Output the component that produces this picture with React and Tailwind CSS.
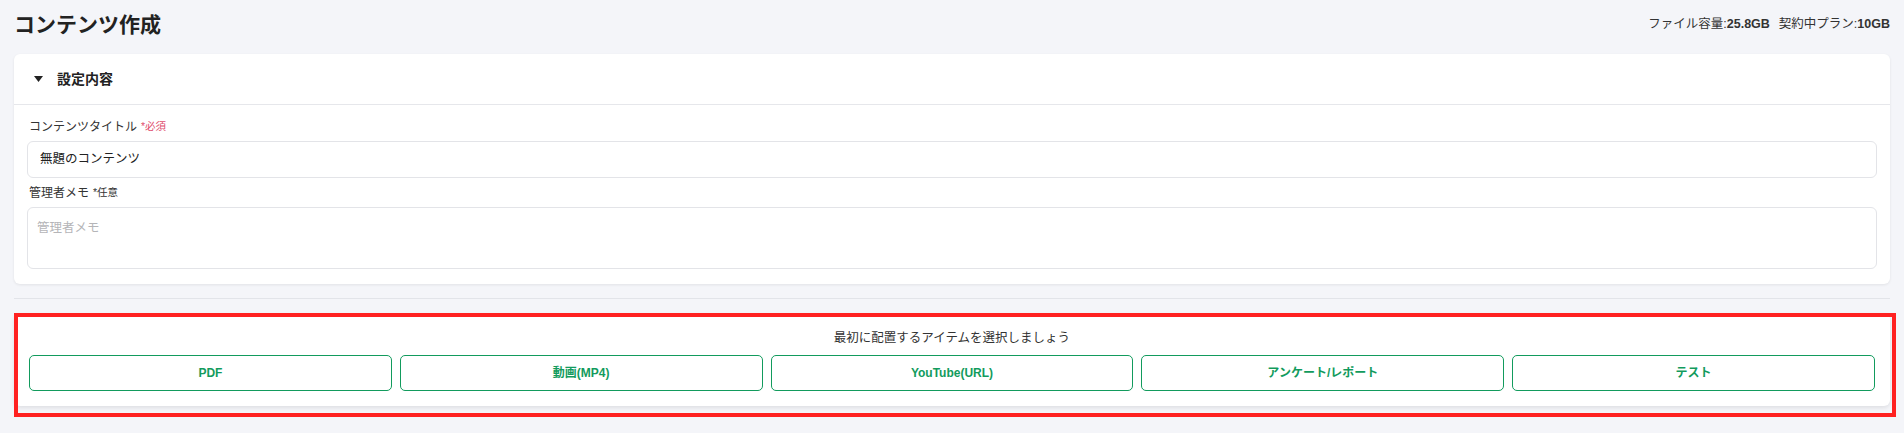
import React from "react";

const FONT = { fontFamily: '"Liberation Sans", "Noto Sans CJK JP", sans-serif' };

const items = ["PDF", "動画(MP4)", "YouTube(URL)", "アンケート/レポート", "テスト"];

export default function App() {
  return (
    <div
      className="min-h-[433px] bg-[#f4f5f9] px-[14px] text-[#222]"
      style={FONT}
    >
      {/* Header */}
      <div className="flex h-[48px] items-center justify-between">
        <h1 className="text-[21px] font-bold leading-none text-[#222]">コンテンツ作成</h1>
        <div className="flex items-center text-[12.5px] text-[#333]">
          <span>ファイル容量:</span>
          <span className="font-bold">25.8GB</span>
          <span className="ml-[9px]">契約中プラン:</span>
          <span className="font-bold">10GB</span>
        </div>
      </div>

      {/* Settings card */}
      <div className="mt-[6px] rounded-[6px] bg-white shadow-[0_1px_3px_rgba(0,0,0,0.08)]">
        <div className="flex h-[51px] items-center border-b border-[#e6e7eb] pl-[20px]">
          <svg width="9" height="6" viewBox="0 0 9 6" className="block">
            <path d="M0 0 L9 0 L4.5 6 Z" fill="#222" />
          </svg>
          <span className="ml-[14px] text-[14px] font-bold leading-none text-[#222]">設定内容</span>
        </div>
        <div className="px-[13px] pt-[13px] pb-[15px]">
          <div className="flex h-[18px] items-center pl-[2px] text-[12px] text-[#333]">
            <span>コンテンツタイトル</span>
            <span className="ml-[4px] text-[10.5px] text-[#e0506e]">*必須</span>
          </div>
          <div className="mt-[5px] flex h-[37px] items-center rounded-[6px] border border-[#e3e4e8] bg-white px-[12px] text-[12.5px] text-[#222]">
            無題のコンテンツ
          </div>
          <div className="mt-[6px] flex h-[18px] items-center pl-[2px] text-[12px] text-[#333]">
            <span>管理者メモ</span>
            <span className="ml-[4px] text-[10.5px] text-[#333]">*任意</span>
          </div>
          <div className="mt-[5px] h-[62px] rounded-[6px] border border-[#e3e4e8] bg-white px-[9px] pt-[11px] text-[12.5px] leading-[18px] text-[#b5b5b8]">
            管理者メモ
          </div>
        </div>
      </div>

      <div className="mt-[14px] h-px bg-[#e2e4e9]" />

      {/* Item selection */}
      <div className="relative mt-[14px]">
        <div className="rounded-[6px] bg-white px-[15px] pt-[16px] pb-[15px] shadow-[0_2px_4px_rgba(0,0,0,0.09)]">
          <p className="h-[18px] text-center text-[12.5px] leading-[18px] text-[#333]">
            最初に配置するアイテムを選択しましょう
          </p>
          <div className="mt-[8px] flex gap-[8px]">
            {items.map((t) => (
              <button
                key={t}
                className="flex h-[36px] flex-1 items-center justify-center rounded-[5px] border border-[#129b5d] bg-white text-[12px] font-bold text-[#129b5d]"
                style={FONT}
              >
                {t}
              </button>
            ))}
          </div>
        </div>
        <div className="pointer-events-none absolute left-0 top-0 right-[-6px] h-[104px] border-4 border-[#ff2121]" />
      </div>
    </div>
  );
}
